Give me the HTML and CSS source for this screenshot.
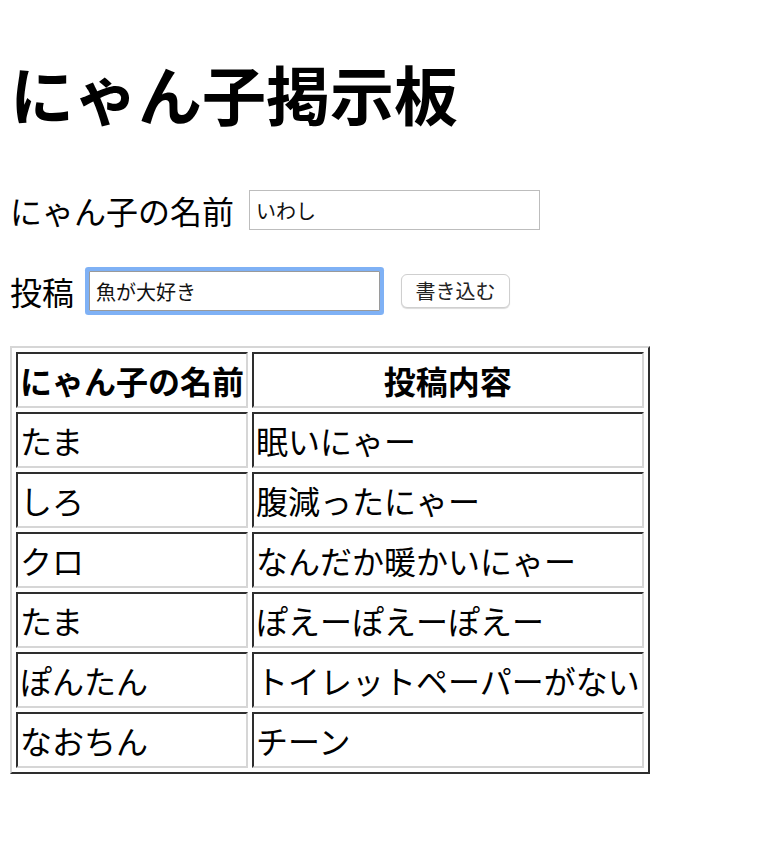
FILE: index.html
```html
<!DOCTYPE html>
<html lang="ja">

<head>
	<meta charset="utf-8">
	<title>にゃん子掲示板</title>
	<link rel="stylesheet" href="styles.css">
</head>

<body>
	<h1>にゃん子掲示板</h1>

	<form class="post-form">
		<div class="form-row">
			<label for="nameInput">にゃん子の名前</label>
			<input type="text" id="nameInput" value="いわし">
		</div>
		<div class="form-row">
			<label for="postInput">投稿</label>
			<input type="text" id="postInput" class="focused" value="魚が大好き">
			<button type="button" id="postBtn">書き込む</button>
		</div>
	</form>

	<table class="board">
		<tr>
			<th class="name-col">にゃん子の名前</th>
			<th>投稿内容</th>
		</tr>
		<tr>
			<td>たま</td>
			<td>眠いにゃー</td>
		</tr>
		<tr>
			<td>しろ</td>
			<td>腹減ったにゃー</td>
		</tr>
		<tr>
			<td>クロ</td>
			<td>なんだか暖かいにゃー</td>
		</tr>
		<tr>
			<td>たま</td>
			<td>ぽえーぽえーぽえー</td>
		</tr>
		<tr>
			<td>ぽんたん</td>
			<td>トイレットペーパーがない</td>
		</tr>
		<tr>
			<td>なおちん</td>
			<td>チーン</td>
		</tr>
	</table>
</body>

</html>
```

FILE: styles.css
```css
body {
	font-family: "Noto Sans CJK JP", sans-serif;
	font-size: 32px;
	color: #000;
	background-color: white;
	margin: 0;
	padding: 0 10px;
}

h1 {
	font-size: 64px;
	line-height: 80px;
	margin: 52px 0 0;
}

.post-form {
	margin-top: 54px;
}

.form-row {
	display: flex;
	align-items: center;
	height: 48px;
	line-height: 48px;
}

.form-row + .form-row {
	margin-top: 33px;
}

.form-row label {
	margin-right: 15px;
}

input[type="text"] {
	box-sizing: border-box;
	width: 291px;
	height: 40px;
	padding: 0 6px;
	font-family: "Noto Sans CJK JP", sans-serif;
	font-size: 20px;
	color: #111;
	border: 1px solid #bdbdbd;
	border-radius: 0;
	outline: none;
}

input.focused {
	border-color: #9a9a9a;
	border-radius: 1px;
	box-shadow: 0 0 0 4px #7fb1f5;
}

button {
	box-sizing: border-box;
	width: 109px;
	height: 34px;
	margin-left: 21px;
	padding: 0;
	font-family: "Noto Sans CJK JP", sans-serif;
	font-size: 20px;
	line-height: 30px;
	color: #222;
	background-color: white;
	border: 1px solid #cfcfcf;
	border-radius: 6px;
	box-shadow: 0 1px 1px rgba(0, 0, 0, 0.15);
	cursor: pointer;
}

.board {
	margin-top: 31px;
	border-collapse: separate;
	border-spacing: 4px;
	border: 2px solid;
	border-color: #d6d6d6 #2e2e2e #2e2e2e #d6d6d6;
}

.board th,
.board td {
	padding: 2px;
	line-height: 48px;
	white-space: nowrap;
	border: 2px solid;
	border-color: #2e2e2e #d6d6d6 #d6d6d6 #2e2e2e;
}

.board td {
	text-align: left;
	font-weight: normal;
}

.board th.name-col {
	text-align: left;
}
```
